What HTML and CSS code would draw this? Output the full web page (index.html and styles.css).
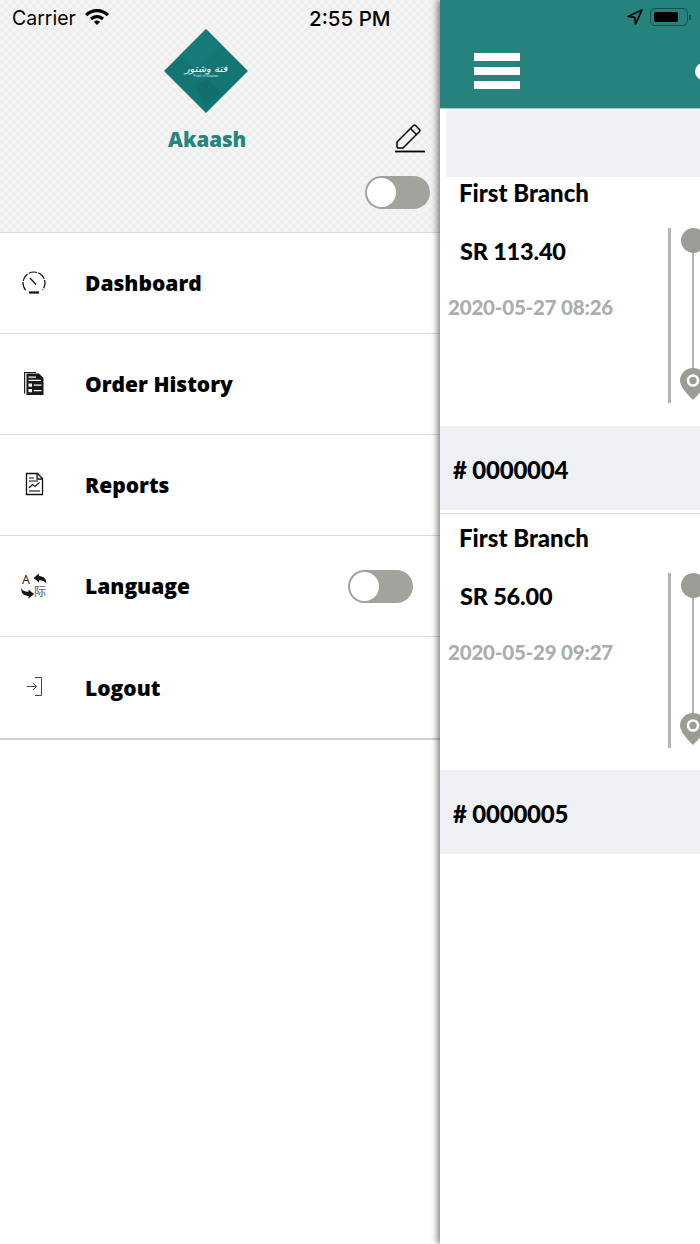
FILE: index.html
```html
<!DOCTYPE html>
<html lang="en">
<head>
<meta charset="utf-8">
<title>Orders</title>
<link rel="stylesheet" href="styles.css">
</head>
<body>
<div class="app">
  <aside class="drawer">
    <div class="profile">
      <div class="status status-left">
        <span class="carrier">Carrier</span>
        <svg class="wifi" viewBox="0 0 26 20" width="26" height="20"><path d="M13 2C8.400 2 4.300 3.800 1 6.900L3.300 9.300C5.900 6.800 9.300 5.300 13 5.300S20.100 6.800 22.700 9.300L25 6.900C21.700 3.800 17.600 2 13 2Z"/><path d="M13 7.900C10.300 7.900 7.800 9 5.900 10.800L8.200 13.200C9.500 12 11.200 11.200 13 11.200S16.500 12 17.800 13.200L20.100 10.800C18.200 9 15.700 7.900 13 7.900Z"/><path d="M13 13.600C11.900 13.600 10.800 14.100 10 14.900L13 18 16 14.900C15.200 14.100 14.100 13.600 13 13.600Z"/></svg>
        <span class="clock">2:55 PM</span>
      </div>
      <div class="logo">
        <svg viewBox="0 0 84 84" width="84" height="84">
          <polygon points="42,0 84,42 42,84 0,42" fill="#137673"/>
          <polygon points="42,0 58,16 32,42 16,26" fill="#1a7c7b" opacity=".6"/>
          <polygon points="30,56 44,50 58,64 42,78" fill="#106c6a" opacity=".6"/>
          <text class="logo-ar" x="42" y="43" text-anchor="middle">فتة وشتور</text>
          <text class="logo-en" x="42" y="48" text-anchor="middle">Fatté in Shatoor</text>
        </svg>
      </div>
      <div class="name-row">
        <span class="name">Akaash</span>
        <svg class="pencil" viewBox="0 0 30 30" width="30" height="30" fill="none" stroke="#000">
          <path d="M2 24 V19 L18.500 2.500 Q19.500 1.500 20.500 2.500 L24.500 6.500 Q25.500 7.500 24.500 8.500 L8 25 H2.500 Z" stroke-width="1.500" stroke-linejoin="round"/>
          <path d="M15.500 5.500 L21.500 11.500" stroke-width="1.500"/>
          <path d="M0 28.500 H30" stroke-width="1.800"/>
        </svg>
      </div>
      <div class="toggle-row">
        <span class="toggle"><span class="knob"></span></span>
      </div>
    </div>
    <nav class="menu">
      <div class="item">
        <svg class="icon" viewBox="0 0 26 26" width="26" height="26" fill="none" stroke="#111" stroke-width="1.200">
          <path d="M4.500 20 A11 11 0 1 1 21.500 20" stroke-dasharray="8.500 1.200"/>
          <path d="M9 8 L15 14.500" stroke-width="1.300"/>
          <path d="M8 22.500 H18" stroke-width="2.200"/>
        </svg>
        <span class="label">Dashboard</span>
      </div>
      <div class="item">
        <svg class="icon" viewBox="0 0 26 26" width="26" height="26">
          <path d="M3 1 H15 V2 H4.200 V22.500 H3 Z" fill="#222"/>
          <path d="M5.500 2.500 H18 L22.500 7 V24 H5.500 Z" fill="#1a1a1a"/>
          <path d="M7.500 5.500 H15 V6.700 H7.500 Z M7.500 8.800 H20 V10 H7.500 Z M7.500 12.500 H11 V15.700 H7.500 Z M12.700 13.500 H20.500 V14.700 H12.700 Z M7.500 18 H11 V21.300 H7.500 Z M12.700 19 H20.500 V20.200 H12.700 Z" fill="#fff"/>
        </svg>
        <span class="label">Order History</span>
      </div>
      <div class="item">
        <svg class="icon" viewBox="0 0 26 26" width="26" height="26" fill="none" stroke="#111" stroke-width="1.300">
          <path d="M5.500 1.500 H16.500 L21.500 6.500 V22.500 H5.500 Z"/>
          <path d="M16 2 V7 H21" />
          <path d="M8 6 H13 M8 9 H17" stroke-width="1"/>
          <path d="M8 16 L11.500 12.500 L14 14.500 L18.500 10.500" stroke-width="1.100"/>
          <path d="M8 19 H19" stroke-width="1.100"/>
        </svg>
        <span class="label">Reports</span>
      </div>
      <div class="item">
        <svg class="icon icon-lang" viewBox="0 0 26 26" width="26" height="26">
          <text class="lang-a" x="1" y="11">A</text>
          <text class="lang-b" x="13" y="23">际</text>
          <path d="M12.500 5 L18 0.500 V3 C23 3.200 25.500 6 25.300 11 C24.300 8.300 21.800 7.200 18 7.300 V9.500 Z" fill="#111"/>
          <path d="M13 21 L7.500 25.500 V23 C2.500 22.800 0 20 0.200 15 C1.200 17.700 3.700 18.800 7.500 18.700 V16.500 Z" fill="#111"/>
        </svg>
        <span class="label">Language</span>
        <span class="toggle toggle-menu"><span class="knob"></span></span>
      </div>
      <div class="item item-last">
        <svg class="icon" viewBox="0 0 26 26" width="26" height="26" fill="none" stroke="#444" stroke-width="1">
          <path d="M14 2.500 H20.500 V20.500 H14"/>
          <path d="M6 11.500 H15.500 M12 8 L15.500 11.500 L12 15"/>
        </svg>
        <span class="label">Logout</span>
      </div>
    </nav>
  </aside>
  <main class="main">
    <header class="bar">
      <div class="status status-right">
        <svg class="arrow" viewBox="0 0 16 16" width="16" height="16"><path d="M15 1 L1 7.500 L7.700 8.300 L8.500 15 Z" fill="none" stroke="#000" stroke-width="1.700" stroke-linejoin="round"/></svg>
        <span class="battery"><span class="charge"></span></span>
        <span class="battery-tip"></span>
      </div>
      <div class="toolbar">
        <div class="burger"><span class="line"></span><span class="line"></span><span class="line"></span></div>
        <span class="pip"></span>
      </div>
    </header>
    <div class="band band-top"></div>
    <section class="order">
      <h2 class="branch">First Branch</h2>
      <div class="order-row">
        <div class="info">
          <div class="price">SR 113.40</div>
          <div class="date">2020-05-27 08:26</div>
        </div>
        <div class="timeline">
          <span class="rule"></span>
          <div class="track">
            <span class="dot"></span>
            <span class="stem"></span>
            <svg class="pin" viewBox="0 0 26 32" width="26" height="32"><path d="M13 0C5.800 0 0 5.500 0 12.500C0 19 8 27 13 32C18 27 26 19 26 12.500C26 5.500 20.200 0 13 0Z" fill="#9c9c96"/><circle cx="13" cy="12.500" r="5" fill="none" stroke="#fff" stroke-width="2.600"/></svg>
          </div>
        </div>
      </div>
    </section>
    <div class="band"><span class="number"># 0000004</span></div>
    <div class="divider"></div>
    <section class="order">
      <h2 class="branch">First Branch</h2>
      <div class="order-row">
        <div class="info">
          <div class="price">SR 56.00</div>
          <div class="date">2020-05-29 09:27</div>
        </div>
        <div class="timeline">
          <span class="rule"></span>
          <div class="track">
            <span class="dot"></span>
            <span class="stem"></span>
            <svg class="pin" viewBox="0 0 26 32" width="26" height="32"><path d="M13 0C5.800 0 0 5.500 0 12.500C0 19 8 27 13 32C18 27 26 19 26 12.500C26 5.500 20.200 0 13 0Z" fill="#9c9c96"/><circle cx="13" cy="12.500" r="5" fill="none" stroke="#fff" stroke-width="2.600"/></svg>
          </div>
        </div>
      </div>
    </section>
    <div class="band"><span class="number"># 0000005</span></div>
  </main>
</div>
</body>
</html>
```
FILE: styles.css
```css
* { box-sizing: border-box; }
html, body { margin: 0; padding: 0; background: #fff; }
.app { display: flex; width: 700px; height: 1244px; overflow: hidden; }

/* drawer */
.drawer { width: 440px; flex: none; }
.profile {
  height: 232px;
  background-color: #efefef;
  background-image:
    radial-gradient(circle at 2px 2px, #f7f7f7 0, #f5f5f5 1.200px, transparent 3px),
    radial-gradient(circle at 6px 6px, #f7f7f7 0, #f5f5f5 1.200px, transparent 3px);
  background-size: 8px 8px;
}
.status { display: flex; align-items: center; }
.status-left { height: 36px; color: #000; padding-left: 12px; font-family: Inter, "Liberation Sans", sans-serif; font-size: 19.500px; }
.carrier { width: 72px; }
.wifi { display: block; margin-left: 0; margin-top: -3px; }
.clock { margin-left: 199px; font-weight: 500; font-size: 20.500px; }
.logo { display: flex; justify-content: center; width: 412px; height: 84px; margin-top: -7px; }
.logo svg { display: block; }
.logo-ar { fill: #fff; font-family: "DejaVu Sans", sans-serif; font-size: 10px; font-style: italic; }
.logo-en { fill: #d5e6e5; font-family: "Liberation Sans", sans-serif; font-size: 3.500px; }
.name-row { display: flex; align-items: center; height: 30px; margin-top: 10px; padding-right: 15px; }
.name { margin-left: 168px; margin-top: 2px; color: #28857e; font-family: "Open Sans", sans-serif; font-weight: 800; font-size: 20.500px; line-height: 30px; }
.pencil { display: block; margin-left: auto; }
.toggle-row { display: flex; justify-content: flex-end; margin-top: 23px; padding-right: 10px; }
.toggle {
  display: flex; align-items: center;
  width: 65px; height: 33px; padding: 0 1.500px;
  border-radius: 17px; background: #a3a39e;
}
.knob { display: block; width: 29px; height: 29px; border-radius: 50%; background: #fff; }

.menu { border-top: 1px solid #dcdcdc; }
.item { display: flex; align-items: center; height: 101px; padding-left: 21px; border-bottom: 1px solid #dcdcdc; }
.item-last { height: 103px; padding-top: 1px; border-bottom: 2px solid #cfcfcf; }
.icon { display: block; flex: none; }
.icon-lang { overflow: visible; opacity: .99; }
.label { margin-left: 38px; color: #000; font-family: "Open Sans", sans-serif; font-weight: 800; font-size: 21px; line-height: 28px; }
.toggle-menu { margin-left: auto; margin-right: 27px; }
.lang-a { fill: #222; font-family: "Noto Sans", sans-serif; font-size: 12.500px; }
.lang-b { fill: #555; font-family: "Noto Sans CJK SC", sans-serif; font-size: 12px; }

/* main */
.main {
  position: relative; z-index: 1;
  width: 260px; flex: none;
  background: #fff; overflow: hidden;
  box-shadow: -3px 0 6px rgba(0, 0, 0, .45);
  font-family: Lato, "Liberation Sans", sans-serif;
}
.bar { height: 109px; background: #26827c; border-bottom: 1px solid #a5c9c6; }
.status-right { justify-content: flex-end; height: 36px; padding: 0 9px 2px 0; }
.arrow { display: block; margin-right: 7px; }
.battery { display: block; width: 38px; height: 18px; padding: 3px; border: 1.500px solid #17514e; border-radius: 5px; }
.charge { display: block; width: 24px; height: 100%; border-radius: 2px; background: #000; }
.battery-tip { display: block; width: 2px; height: 5px; margin-left: 1px; background: #17514e; }
.toolbar { display: flex; align-items: center; justify-content: space-between; height: 36px; margin-top: 17px; padding-left: 34px; }
.burger { display: flex; flex-direction: column; gap: 5.500px; width: 46px; }
.line { display: block; height: 8.500px; background: #fff; }
.pip { display: block; width: 17px; height: 17px; margin-right: -12px; border-radius: 50%; background: #fff; }

.band { display: flex; align-items: center; height: 84px; padding: 3px 0 0 13px; background: #eff0f4; }
.band-top { height: 68px; margin-left: 6px; padding: 0; background: #f1f1f6; }
.number { color: #000; font-weight: 900; font-size: 24px; letter-spacing: -.2px; }
.divider { height: 9px; margin-top: 3px; border-top: 1px solid #dddde0; }

.order { height: 248.500px; }
.branch { margin: 0; height: 34px; padding-left: 19px; color: #000; font-weight: 900; font-size: 24px; line-height: 32px; }
.order-row { display: flex; }
.info { width: 228px; flex: none; padding-left: 8px; }
.price { height: 34px; margin-top: 23px; padding-left: 12px; color: #000; font-weight: 900; font-size: 23.500px; letter-spacing: -.2px; line-height: 34px; }
.date { height: 30px; margin-top: 24px; color: #adadad; font-weight: 900; font-size: 20.500px; letter-spacing: -.2px; line-height: 30px; white-space: nowrap; }
.timeline { display: flex; margin-top: 17px; }
.rule { display: block; width: 3px; height: 175px; background: #b4b4b4; }
.track { display: flex; flex-direction: column; align-items: center; width: 26px; margin-left: 9px; flex: none; }
.dot { display: block; width: 25px; height: 25px; flex: none; border-radius: 50%; background: #9c9c96; }
.stem { display: block; width: 2px; height: 115px; flex: none; background: #b4b4b0; }
.pin { display: block; flex: none; }
```
